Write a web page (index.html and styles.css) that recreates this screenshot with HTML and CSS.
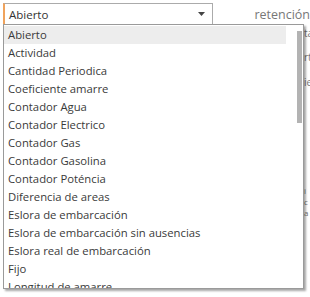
FILE: index.html
```html
<!DOCTYPE html>
<html>
<head>
<meta charset="utf-8">
<link rel="stylesheet" href="styles.css">
</head>
<body>
<div class="page">
  <div class="top">
    <div class="select">
      <span class="select-value">Abierto</span>
      <svg class="arrow" width="7" height="4" viewBox="0 0 7 4"><path d="M0 0H7L3.5 4Z" fill="#444"/></svg>
    </div>
    <span class="label">retención</span>
  </div>
  <div class="under">
    <span class="frag f1">ta</span>
    <span class="frag f2">rt</span>
    <span class="frag f3">ie</span>
    <span class="frag f4">i<br>c<br>a</span>
  </div>
  <div class="list">
    <ul class="options">
      <li class="opt active">Abierto</li>
      <li class="opt">Actividad</li>
      <li class="opt">Cantidad Periodica</li>
      <li class="opt">Coeficiente amarre</li>
      <li class="opt">Contador Agua</li>
      <li class="opt">Contador Electrico</li>
      <li class="opt">Contador Gas</li>
      <li class="opt">Contador Gasolina</li>
      <li class="opt">Contador Poténcia</li>
      <li class="opt">Diferencia de areas</li>
      <li class="opt">Eslora de embarcación</li>
      <li class="opt">Eslora de embarcación sin ausencias</li>
      <li class="opt">Eslora real de embarcación</li>
      <li class="opt">Fijo</li>
      <li class="opt">Longitud de amarre</li>
    </ul>
    <div class="scrollbar"><div class="thumb"></div></div>
  </div>
</div>
</body>
</html>
```
FILE: styles.css
```css
html, body {
  margin: 0;
  padding: 0;
  background: #fff;
}
body {
  font-family: "Open Sans", "Noto Sans", sans-serif;
  font-size: 11.3px;
  color: #3a3a3a;
  width: 310px;
  height: 297px;
  overflow: hidden;
}
.page {
  position: relative;
  width: 310px;
  height: 297px;
}
.top {
  display: flex;
  align-items: center;
  padding: 3px 0 0 3px;
}
.select {
  box-sizing: border-box;
  width: 221px;
  height: 22px;
  border: 1px solid #ababab;
  border-left: 2px solid #f0a35c;
  display: flex;
  align-items: center;
  justify-content: space-between;
  padding: 0 7px 0 4px;
}
.select-value {
  font-size: 11.5px;
  color: #333;
}
.label {
  margin-left: 41px;
  font-size: 12.5px;
  color: #777;
  white-space: nowrap;
}
.under {
  display: flex;
  flex-direction: column;
  padding-left: 304px;
  font-size: 10px;
  color: #777;
  line-height: 12px;
}
.frag { display: block; height: 12px; overflow: hidden; }
.f1 { margin-top: 2px; }
.f2 { margin-top: 12px; }
.f3 { margin-top: 13px; }
.f4 { margin-top: 97px; height: 33px; line-height: 11px; font-size: 8px; }
.list {
  position: absolute;
  left: 3px;
  top: 24px;
  width: 301px;
  height: 265px;
  box-sizing: border-box;
  border: 1px solid #9a9a9a;
  background: #fff;
  box-shadow: 2px 2px 2px rgba(0,0,0,0.35);
  display: flex;
  overflow: hidden;
}
.options {
  list-style: none;
  margin: 0;
  padding: 1px 0 0 0;
  width: 282px;
}
.opt {
  height: 18px;
  line-height: 18px;
  padding-left: 4px;
  white-space: nowrap;
}
.opt.active {
  background: #ededed;
  height: 14px;
  line-height: 14px;
  padding-top: 2px;
  padding-bottom: 2px;
}
.scrollbar {
  margin-left: 11px;
  width: 5px;
  padding-top: 6px;
}
.thumb {
  width: 5px;
  height: 92px;
  background: #b3b3b3;
}
```
